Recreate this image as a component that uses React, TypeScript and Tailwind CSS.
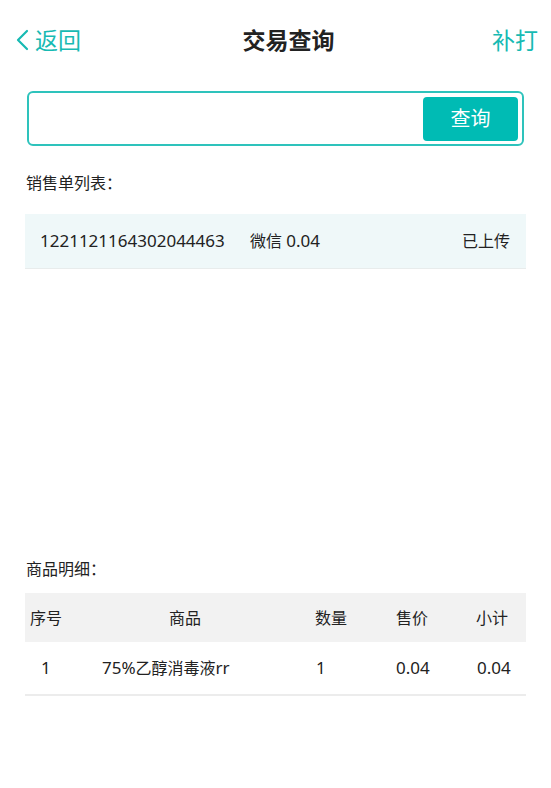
const font = { fontFamily: '"Noto Sans", "Noto Sans CJK SC", sans-serif' }

function ChevronLeft() {
  return (
    <svg width="16" height="24" viewBox="0 0 16 24" fill="none" className="text-[#17bab3]">
      <path d="M13 3 L4 12 L13 21" stroke="currentColor" strokeWidth="2.2" strokeLinecap="round" strokeLinejoin="round" />
    </svg>
  )
}

export default function App() {
  return (
    <div className="min-h-[788px] w-[551px] bg-white text-[#222]" style={font}>
      <header className="flex h-[80px] items-center justify-between pl-[14px] pr-[13px]">
        <button className="flex items-center gap-[5px] text-[23px] text-[#17bab3]">
          <ChevronLeft />
          <span>返回</span>
        </button>
        <h1 className="pl-[4px] text-[23px] font-bold text-[#222]">交易查询</h1>
        <button className="text-[23px] text-[#17bab3]">补打</button>
      </header>

      <div className="mx-[27px] mt-[11px] flex h-[55px] items-center rounded-[6px] border-2 border-[#2ec3bc] pr-[4px]">
        <input className="h-full flex-1 bg-transparent px-3 outline-none" />
        <button className="flex h-[44px] w-[95px] items-center justify-center rounded-[4px] bg-[#00bbb4] text-[20px] text-white">
          查询
        </button>
      </div>

      <p className="ml-[26px] mt-[25px] text-[16px] leading-[24px]">销售单列表：</p>

      <div className="mx-[25px] mt-[19px] flex h-[55px] items-center border-b border-[#e8ecec] bg-[#eff8f9] pl-[15px] pr-[16px] text-[16px]">
        <span className="w-[210px] text-[17px]">1221121164302044463</span>
        <span className="flex-1">
          微信 <span className="text-[17px]">0.04</span>
        </span>
        <span>已上传</span>
      </div>

      <p className="ml-[26px] mt-[288px] text-[16px] leading-[24px]">商品明细：</p>

      <div className="mx-[25px] mt-[12px] text-[16px]">
        <div className="flex h-[49px] items-center bg-[#f2f2f2]">
          <span className="w-[60px] pl-[5px]">序号</span>
          <span className="w-[200px] text-center">商品</span>
          <span className="w-[30px]" />
          <span className="w-[81px]">数量</span>
          <span className="w-[80px]">售价</span>
          <span className="flex-1">小计</span>
        </div>
        <div className="flex h-[54px] items-center border-b-2 border-[#ececec] text-[17px]">
          <span className="w-[77px] pl-[16px]">1</span>
          <span className="w-[213px]">
            75%<span className="text-[16px]">乙醇消毒液</span>rr
          </span>
          <span className="w-[81px] pl-[1px]">1</span>
          <span className="w-[80px]">0.04</span>
          <span className="flex-1 pl-[1px]">0.04</span>
        </div>
      </div>
    </div>
  )
}
